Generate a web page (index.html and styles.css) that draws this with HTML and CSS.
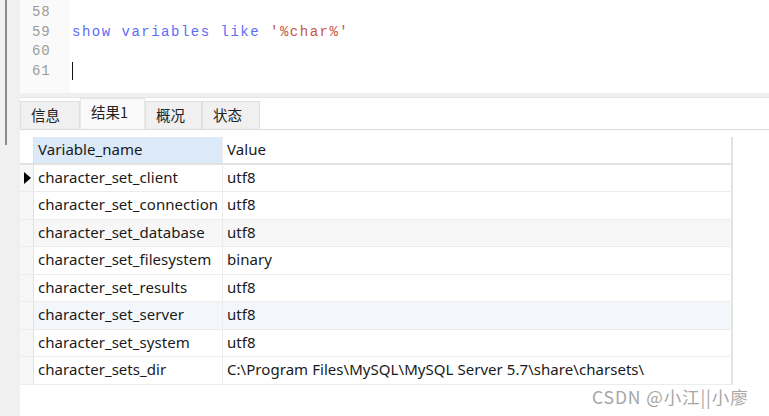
FILE: index.html
```html
<!DOCTYPE html>
<html>
<head>
<meta charset="utf-8">
<link rel="stylesheet" href="styles.css">
</head>
<body>
<div class="app">
  <div class="side"><div class="thumb"></div></div>
  <div class="main">
    <div class="editor">
      <div class="gutter">
        <div class="ln">58</div>
        <div class="ln">59</div>
        <div class="ln">60</div>
        <div class="ln">61</div>
      </div>
      <div class="code">
        <div class="cl"></div>
        <div class="cl"><span class="kw">show variables like</span> <span class="str">'%char%'</span></div>
        <div class="cl"></div>
        <div class="cl"><span class="caret"></span></div>
      </div>
    </div>
    <div class="band"></div>
    <div class="tabs">
      <div class="tab">信息</div>
      <div class="tab active">结果1</div>
      <div class="tab">概况</div>
      <div class="tab">状态</div>
    </div>
    <div class="result">
      <div class="grid">
        <div class="row head"><div class="rh"></div><div class="c1 sel">Variable_name</div><div class="c2">Value</div></div>
        <div class="row"><div class="rh"><span class="arrow"></span></div><div class="c1">character_set_client</div><div class="c2">utf8</div></div>
        <div class="row"><div class="rh"></div><div class="c1">character_set_connection</div><div class="c2">utf8</div></div>
        <div class="row alt"><div class="rh"></div><div class="c1">character_set_database</div><div class="c2">utf8</div></div>
        <div class="row"><div class="rh"></div><div class="c1">character_set_filesystem</div><div class="c2">binary</div></div>
        <div class="row"><div class="rh"></div><div class="c1">character_set_results</div><div class="c2">utf8</div></div>
        <div class="row hover"><div class="rh"></div><div class="c1">character_set_server</div><div class="c2">utf8</div></div>
        <div class="row"><div class="rh"></div><div class="c1">character_set_system</div><div class="c2">utf8</div></div>
        <div class="row"><div class="rh"></div><div class="c1">character_sets_dir</div><div class="c2">C:\Program Files\MySQL\MySQL Server 5.7\share\charsets\</div></div>
      </div>
      <div class="watermark">CSDN @小江||小廖</div>
    </div>
  </div>
</div>
</body>
</html>
```

FILE: styles.css
```css
html, body {
  margin: 0;
  padding: 0;
  background: #fff;
}
.app {
  display: flex;
  width: 769px;
  height: 416px;
  overflow: hidden;
}
.side {
  width: 20px;
  background: #f0f0f0;
  flex-shrink: 0;
}
.thumb {
  margin-left: 5px;
  width: 2px;
  height: 145px;
  background: #8c8c8c;
}
.main {
  flex: 1;
  display: flex;
  flex-direction: column;
  min-width: 0;
}
.editor {
  height: 93px;
  display: flex;
  background: #fff;
  font-family: "Liberation Mono", "DejaVu Sans Mono", monospace;
  font-size: 14px;
  letter-spacing: 1.5px;
}
.gutter {
  width: 50px;
  background: #fafafa;
  padding-top: 3px;
  box-sizing: border-box;
}
.ln {
  height: 19.7px;
  line-height: 19.7px;
  padding-left: 12px;
  color: #9a9a9a;
  letter-spacing: 0.8px;
}
.code {
  flex: 1;
  padding-top: 3px;
  padding-left: 2px;
}
.cl {
  height: 19.7px;
  line-height: 19.7px;
  white-space: pre;
}
.kw { color: #5a6df5; }
.str { color: #c8563f; }
.caret {
  display: inline-block;
  width: 1px;
  height: 18px;
  background: #111;
  vertical-align: middle;
}
.band {
  height: 4px;
  background: #f0f0f0;
  border-bottom: 1px solid #e4e4e4;
}
.tabs {
  display: flex;
  align-items: flex-end;
  height: 31px;
  border-bottom: 1px solid #dcdcdc;
  font-family: "Noto Sans CJK SC", sans-serif;
  font-size: 14.5px;
}
.tab {
  height: 28px;
  line-height: 25px;
  padding: 0 14px 0 10px;
  background: #f0f0f0;
  border: 1px solid #e0e0e0;
  border-bottom: none;
  color: #222;
  box-sizing: border-box;
}
.tab:first-child { width: 60px; }
.tab.active {
  height: 31px;
  line-height: 25px;
  background: #fafafa;
  width: 65px;
  border-color: #e8e8e8;
}
.tab:nth-child(3) { width: 57px; }
.tab:nth-child(4) { width: 58px; }
.result {
  flex: 1;
  position: relative;
  padding-top: 7px;
}
.grid {
  width: 713px;
  font-family: "Noto Sans", "Noto Sans CJK SC", sans-serif;
  font-size: 15px;
  letter-spacing: 0.05px;
  color: #1a1a1a;
}
.row {
  display: flex;
  height: 27.5px;
  border-bottom: 1px solid #ececec;
  box-sizing: border-box;
}
.row.head {
  border-bottom: 2px solid #e2e2e2;
}
.rh {
  width: 14px;
  flex-shrink: 0;
  border-right: 1px solid #e2e2e2;
  box-sizing: border-box;
  background: #f7f7f7;
  display: flex;
  align-items: center;
  justify-content: center;
}
.head .rh { background: #fff; }
.c1, .c2 {
  line-height: 24px;
  padding-left: 4px;
  white-space: nowrap;
  overflow: hidden;
  box-sizing: border-box;
}
.c1 {
  width: 189px;
  border-right: 1px solid #ececec;
}
.c2 {
  width: 510px;
  border-right: 2px solid #e2e2e2;
}
.c1.sel { background: #dbe9f8; }
.alt { background: #f7f7f7; }
.hover { background: #f3f7fc; }
.arrow {
  width: 0;
  height: 0;
  border-left: 7px solid #000;
  border-top: 6px solid transparent;
  border-bottom: 6px solid transparent;
  margin-left: 2px;
}
.watermark {
  position: absolute;
  left: 572px;
  top: 254px;
  font-family: "Noto Sans CJK SC", sans-serif;
  font-size: 17.5px;
  letter-spacing: 0.9px;
  color: #a6a6a6;
  white-space: nowrap;
}
```
